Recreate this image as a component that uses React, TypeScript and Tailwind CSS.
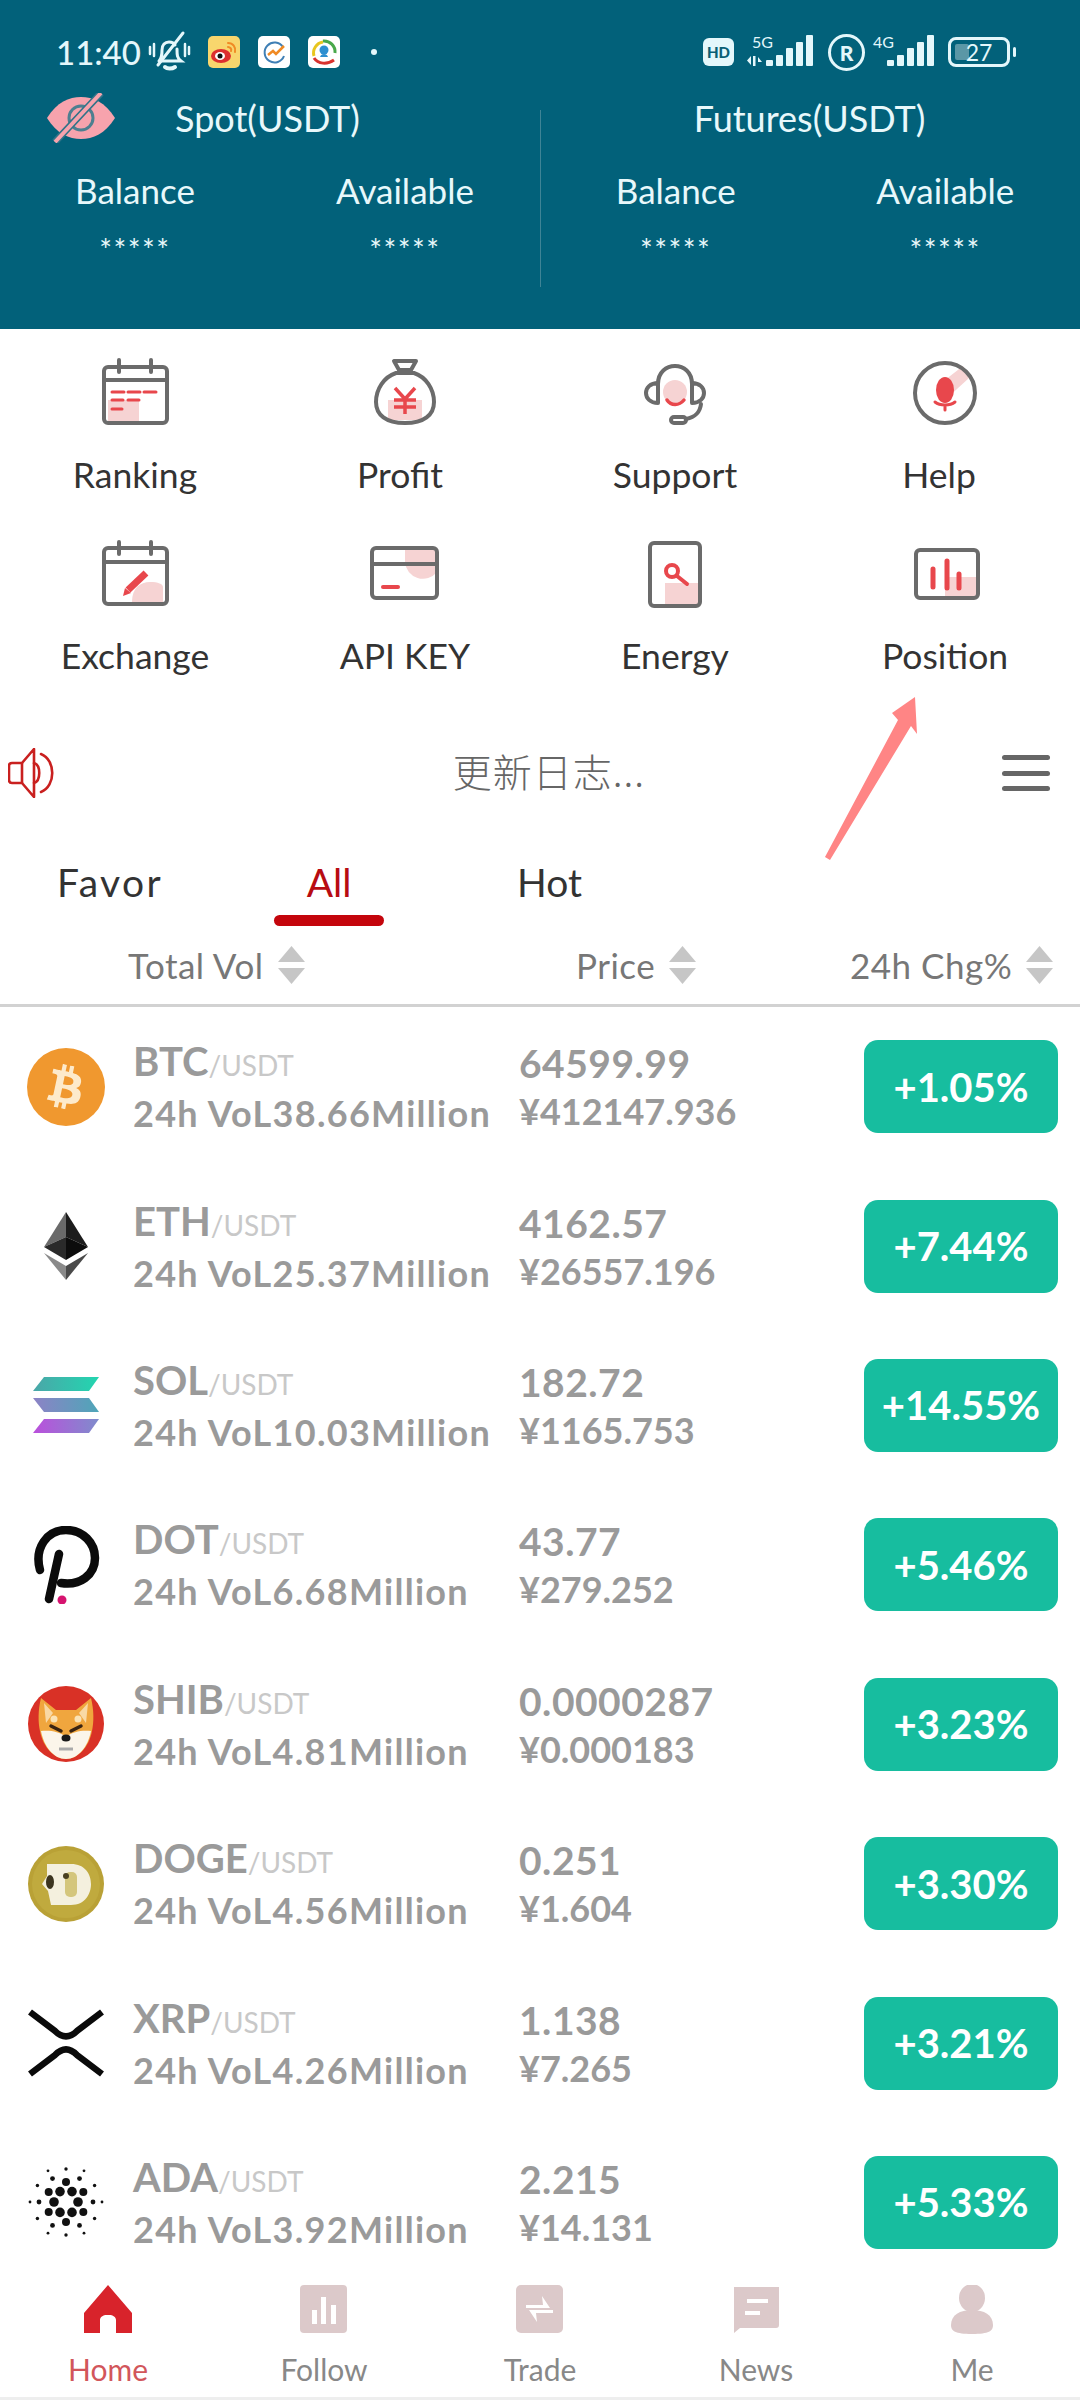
import React from 'react';
import { FaBtc } from 'react-icons/fa';

const GREY = '#6b6b6b';
const RED = '#e8474c';
const PINK = '#f6d3d3';

const StatusBar = () => (
  <div className="flex h-[34px] items-center text-[#e4f7fb]">
    <span className="ml-[56px] w-[84px] text-[33px] leading-none font-medium">11:40</span>
    {/* muted bell */}
    <svg viewBox="0 0 46 46" className="ml-[6px] h-[46px] w-[46px]" fill="none" stroke="currentColor" strokeWidth="3" strokeLinecap="round">
      <path d="M13 32c3-3 3-6 3-11 0-5 3-8 7-8 3 0 5 1 6 3M31 20c0 6 0 9 4 12H13" />
      <path d="M19 38c2 2 7 2 10 0" strokeWidth="4" />
      <path d="M12 36 L37 4" />
      <path d="M4 18v7M8 15v12M39 15v12M43 18v7" strokeWidth="2.5" />
    </svg>
    {/* weibo */}
    <svg viewBox="0 0 32 32" className="ml-[16px] h-[32px] w-[32px]">
      <rect width="32" height="32" rx="5" fill="#f8d66d" />
      <ellipse cx="13" cy="20" rx="10" ry="7" fill="#dc2f2f" />
      <ellipse cx="12" cy="20" rx="5" ry="4" fill="#fff" />
      <circle cx="12" cy="20" r="2.5" fill="#111" />
      <path d="M20 7c5 0 8 4 7 9M20 11c2 0 4 2 3 4" fill="none" stroke="#f08a24" strokeWidth="2" strokeLinecap="round" />
    </svg>
    <svg viewBox="0 0 32 32" className="ml-[18px] h-[32px] w-[32px]">
      <rect width="32" height="32" rx="5" fill="#fff" />
      <path d="M25 11a10 10 0 1 0 1 9" fill="none" stroke="#3f7fb5" strokeWidth="2" />
      <path d="M10 19l5-4 3 3 8-8" fill="none" stroke="#f08a24" strokeWidth="2.5" />
    </svg>
    <svg viewBox="0 0 32 32" className="ml-[18px] h-[32px] w-[32px]">
      <rect width="32" height="32" rx="5" fill="#fff" />
      <path d="M6 20a11 11 0 0 1 9-14" fill="none" stroke="#e8c61e" strokeWidth="3" />
      <path d="M15 5a11 11 0 0 1 12 12" fill="none" stroke="#49a84a" strokeWidth="3" />
      <path d="M6 22c4 6 13 7 20 2" fill="none" stroke="#d8322e" strokeWidth="3" />
      <circle cx="16" cy="14" r="4.5" fill="#2d8fd0" />
      <path d="M12 21c1-4 7-4 8 0z" fill="#2d8fd0" />
    </svg>
    <span className="ml-[31px] h-[6px] w-[6px] rounded-full bg-[#e4f7fb]" />

    <div className="ml-auto mr-[70px] flex items-center">
      <span className="flex h-[28px] w-[31px] items-center justify-center rounded-[6px] bg-[#e4f7fb] text-[15px] leading-none font-black text-[#0a5f75]">HD</span>
      <div className="relative ml-[12px] h-[34px] w-[68px]">
        <span className="absolute left-[6px] top-[-2px] text-[16px] leading-[18px]">5G</span>
        <svg viewBox="0 0 68 34" className="h-[34px] w-[68px]" fill="currentColor">
          <path d="M5 21v9l-4-4.500zM7 21h2.500v10H7zM12 22l4 5h-4z" />
          <rect x="20" y="25" width="7" height="6" rx="1" />
          <rect x="30" y="20" width="7" height="11" rx="1" />
          <rect x="40" y="13" width="7" height="18" rx="1" />
          <rect x="50" y="7" width="7" height="24" rx="1" />
          <rect x="60" y="0" width="7" height="31" rx="1" />
        </svg>
      </div>
      <div className="ml-[14px] flex h-[37px] w-[37px] items-center justify-center rounded-full border-[3px] border-[#e4f7fb] text-[21px] leading-none font-black">R</div>
      <div className="relative ml-[8px] h-[34px] w-[61px]">
        <span className="absolute left-0 top-[-2px] text-[16px] leading-[18px]">4G</span>
        <svg viewBox="0 0 61 34" className="h-[34px] w-[61px]" fill="currentColor">
          <rect x="14" y="25" width="7" height="6" rx="1" />
          <rect x="24" y="20" width="7" height="11" rx="1" />
          <rect x="34" y="13" width="7" height="18" rx="1" />
          <rect x="44" y="7" width="7" height="24" rx="1" />
          <rect x="54" y="0" width="7" height="31" rx="1" />
        </svg>
      </div>
      <div className="relative ml-[14px] flex h-[30px] w-[62px] items-center justify-center rounded-[8px] border-[3px] border-[#e4f7fb] text-[23px] leading-none">
        <span className="absolute left-[4px] top-[4px] h-[16px] w-[14px] rounded-[2px] bg-[#5b97a6]" />
        <span className="relative">27</span>
        <span className="absolute -right-[9px] top-[7px] h-[10px] w-[3px] rounded-full bg-[#e4f7fb]" />
      </div>
    </div>
  </div>
);

const EyeOff = () => (
  <svg viewBox="0 0 68 50" className="h-[50px] w-[68px] shrink-0">
    <path d="M0 25C10 9 22 4 34 4s24 5 34 21C58 41 46 46 34 46S10 41 0 25z" fill="#f7a3ad" />
    <circle cx="34" cy="25" r="12" fill="none" stroke="#4d7f90" strokeWidth="3" />
    <path d="M8 49 L54 0" stroke="#2f7388" strokeWidth="7" />
    <path d="M8 49 L54 0" stroke="#f7a3ad" strokeWidth="4" />
  </svg>
);

const Amounts = () => (
  <div className="mt-[46px] grid grid-cols-2 text-center text-[#e8f8fb]">
    <div>
      <div className="h-[36px] text-[35px] leading-[36px]">Balance</div>
      <div className="mt-[22px] h-[30px] text-[30px] leading-[38px] tracking-[1.500px]">*****</div>
    </div>
    <div>
      <div className="h-[36px] text-[35px] leading-[36px]">Available</div>
      <div className="mt-[22px] h-[30px] text-[30px] leading-[38px] tracking-[1.500px]">*****</div>
    </div>
  </div>
);

const Header = () => (
  <div className="h-[329px] shrink-0 bg-[#02617a] pt-[35px]">
    <StatusBar />
    <div className="mt-[41px] grid grid-cols-2">
      <div className="h-[177px]">
        <div className="flex h-[16px] items-center pl-[47px] text-[36px] text-[#e8f8fb]">
          <EyeOff />
          <span className="ml-[60px]">Spot(USDT)</span>
        </div>
        <Amounts />
      </div>
      <div className="h-[177px] border-l border-[#3f8496]">
        <div className="flex h-[16px] items-center justify-center pr-[2px] text-[36px] text-[#e8f8fb]">Futures(USDT)</div>
        <Amounts />
      </div>
    </div>
  </div>
);

const Box = ({ children }: { children: React.ReactNode }) => (
  <svg viewBox="0 0 80 70" className="mx-auto h-[70px] w-[80px]" fill="none" stroke={GREY} strokeWidth="4" strokeLinecap="round" strokeLinejoin="round">
    {children}
  </svg>
);

const menuIcons: Record<string, React.ReactNode> = {
  Ranking: (
    <Box>
      <rect x="13" y="42" width="31" height="21" fill={PINK} stroke="none" />
      <rect x="9" y="9" width="63" height="56" rx="4" />
      <path d="M9 22h63M24 2v12M56 2v12" />
      <path d="M17 34h12M33 34h12M49 34h12M17 42h11M33 42h11M17 51h10" stroke={RED} strokeWidth="3" />
    </Box>
  ),
  Profit: (
    <Box>
      <rect x="23" y="42" width="34" height="20" fill={PINK} stroke="none" />
      <path d="M29 3h22l-5 9H34z" />
      <path d="M31 15C19 19 11 31 11 44c0 13 10 21 29 21s29-8 29-21c0-13-8-25-20-29z" />
      <path d="M30 30l10 11 10-11M40 41v15M29 42h22M29 49h22" stroke={RED} strokeWidth="3.5" strokeLinecap="butt" />
    </Box>
  ),
  Support: (
    <Box>
      <circle cx="40" cy="34" r="12" fill={PINK} stroke="none" />
      <path d="M23 26c0-24 34-24 34 0" />
      <path d="M23 25c-8 0-12 5-12 10s4 10 12 10zM57 25c8 0 12 5 12 10s-4 10-12 10z" />
      <path d="M66 46c-1 9-6 13-15 15" />
      <rect x="36" y="59" width="15" height="6" rx="3" />
      <path d="M32 42c4 6 12 6 17 0" stroke={RED} strokeWidth="3.5" />
    </Box>
  ),
  Help: (
    <Box>
      <path d="M40 22L58 8l6 12-24 22z" fill={PINK} stroke="none" />
      <circle cx="40" cy="35" r="30" />
      <ellipse cx="40" cy="32" rx="9" ry="13" fill={RED} stroke="none" />
      <path d="M30 44c5 4 15 4 20 0M40 47v5" stroke={RED} strokeWidth="3" />
    </Box>
  ),
  Exchange: (
    <Box>
      <path d="M37 62c0-14 8-20 18-20 8 0 13 2 13 5v15z" fill={PINK} stroke="none" />
      <rect x="9" y="8" width="63" height="56" rx="4" />
      <path d="M9 22h63M24 2v12M56 2v12" />
      <path d="M33 50L51 33" stroke={RED} strokeWidth="7" strokeLinecap="butt" />
      <path d="M28 56l2-8 6 5z" fill={RED} stroke="none" />
    </Box>
  ),
  'API KEY': (
    <Box>
      <path d="M40 8h32v24a18 18 0 0 1-32-10z" fill={PINK} stroke="none" />
      <rect x="7" y="8" width="65" height="50" rx="4" />
      <path d="M7 24h65" />
      <path d="M18 47h15" stroke={RED} strokeWidth="4" />
    </Box>
  ),
  Energy: (
    <Box>
      <rect x="30" y="43" width="33" height="21" fill={PINK} stroke="none" />
      <rect x="15" y="3" width="50" height="63" rx="4" />
      <circle cx="37" cy="31" r="6" stroke={RED} />
      <path d="M42 36l10 8" stroke={RED} />
    </Box>
  ),
  Position: (
    <Box>
      <rect x="40" y="37" width="31" height="19" fill={PINK} stroke="none" />
      <rect x="11" y="10" width="62" height="48" rx="4" />
      <path d="M28 29v18M42 21v27M54 34v14" stroke={RED} strokeWidth="5" />
    </Box>
  ),
};

const MenuCell = ({ label, shift }: { label: string; shift?: string }) => (
  <div className="text-center">
    {menuIcons[label]}
    <div className={`text-[35.500px] leading-[40px] text-[#333] ${shift ?? ''}`}>{label}</div>
  </div>
);

const Menu = () => (
  <div className="grid shrink-0 grid-cols-4 pt-[29px]">
    <div className="col-span-4 grid grid-cols-4 [&_div_div]:mt-[27px]">
      <MenuCell label="Ranking" />
      <MenuCell label="Profit" shift="pr-[10px]" />
      <MenuCell label="Support" />
      <MenuCell label="Help" shift="pr-[12px]" />
    </div>
    <div className="col-span-4 mt-[45px] grid grid-cols-4 [&_div_div]:mt-[26px]">
      <MenuCell label="Exchange" />
      <MenuCell label="API KEY" />
      <MenuCell label="Energy" />
      <MenuCell label="Position" />
    </div>
  </div>
);

const Notice = () => (
  <div className="mt-[47px] flex h-[100px] shrink-0 items-center justify-between pl-[8px] pr-[30px]">
    <svg viewBox="0 0 48 50" className="h-[50px] w-[48px]" fill="none" stroke="#c9201f" strokeWidth="2.6" strokeLinejoin="round">
      <path d="M14 15H4c-2 0-3 1-3 3v14c0 2 1 3 3 3h10l12 14V1z" />
      <path d="M14 15v20" />
      <path d="M26 15c7 2 7 18 0 20M33 6c15 6 15 32 0 38" strokeLinecap="round" />
    </svg>
    <span className="mb-[5px] ml-[40px] font-['Noto_Sans_CJK_SC',sans-serif] text-[39px] font-light tracking-[1px] text-[#666]">更新日志...</span>
    <div className="flex h-[36px] w-[48px] flex-col justify-between">
      <span className="h-[5px] rounded-full bg-[#666]" />
      <span className="h-[5px] rounded-full bg-[#666]" />
      <span className="h-[5px] rounded-full bg-[#666]" />
    </div>
  </div>
);

const Tabs = () => (
  <div className="mt-[34px] flex shrink-0 pl-[57px] text-[39px] leading-[50px]">
    <div className="w-[104px] tracking-[2.400px] text-[#333]">Favor</div>
    <div className="ml-[113px] w-[110px] text-center text-[#b80c12]">
      All
      <div className="mt-[8px] h-[11px] rounded-full bg-[#c4050c]" />
    </div>
    <div className="ml-[133px] text-[#333]">Hot</div>
  </div>
);

const SortArrows = () => (
  <svg viewBox="0 0 27 38" className="ml-[14px] h-[38px] w-[27px] shrink-0" fill="#c6c6c6">
    <path d="M13.5 0L27 16H0zM0 22h27L13.5 38z" />
  </svg>
);

const SortHeader = () => (
  <div className="mt-[19px] shrink-0 border-b-[3px] border-[#d2d2d2] pb-[19px]">
    <div className="grid h-[40px] grid-cols-[448px_274px_1fr] pl-[128px] text-[35px] leading-[40px] tracking-[0.500px] text-[#777]">
      <div className="flex items-center">Total Vol<SortArrows /></div>
      <div className="flex items-center">Price<SortArrows /></div>
      <div className="flex items-center">24h Chg%<SortArrows /></div>
    </div>
  </div>
);

const coinIcons: Record<string, React.ReactNode> = {
  BTC: (
    <div className="flex h-[78px] w-[78px] items-center justify-center rounded-full bg-[#f0982f] text-[#fdeacb]">
      <FaBtc className="h-[44px] w-[44px] rotate-[12deg]" />
    </div>
  ),
  ETH: (
    <svg viewBox="0 0 78 78" className="h-[78px] w-[78px]">
      <path d="M39 5L17 40l22-10z" fill="#6a6a6a" />
      <path d="M39 5l22 35-22-10z" fill="#1c1c1c" />
      <path d="M17 40l22 13V30z" fill="#2a2a2a" />
      <path d="M61 40L39 53V30z" fill="#0c0c0c" />
      <path d="M17 46l22 27V59z" fill="#8a8a8a" />
      <path d="M61 46L39 73V59z" fill="#4a4a4a" />
    </svg>
  ),
  SOL: (
    <svg viewBox="0 0 78 78" className="h-[78px] w-[78px]">
      <defs>
        <linearGradient id="solA" x1="0" x2="1"><stop offset="0" stopColor="#4ba6a8" /><stop offset="1" stopColor="#22d6b0" /></linearGradient>
        <linearGradient id="solB" x1="0" x2="1"><stop offset="0" stopColor="#8d82c6" /><stop offset="1" stopColor="#4ea6b8" /></linearGradient>
        <linearGradient id="solC" x1="0" x2="1"><stop offset="0" stopColor="#bb4fdc" /><stop offset="1" stopColor="#7f8ccc" /></linearGradient>
      </defs>
      <path d="M17 11h55L62 25H6z" fill="url(#solA)" />
      <path d="M6 32h56l10 14H17z" fill="url(#solB)" />
      <path d="M17 53h55L62 67H6z" fill="url(#solC)" />
    </svg>
  ),
  DOT: (
    <svg viewBox="0 0 78 78" className="h-[78px] w-[78px]" fill="none">
      <path d="M13 44C7 22 20 4 39 4c17 0 29 13 29 28 0 17-15 28-34 25" stroke="#0b0b0b" strokeWidth="8.500" strokeLinecap="round" />
      <path d="M32 28L22 73" stroke="#0b0b0b" strokeWidth="8.500" strokeLinecap="round" />
      <circle cx="35" cy="74" r="4.500" fill="#d6136f" />
    </svg>
  ),
  SHIB: (
    <svg viewBox="0 0 78 78" className="h-[78px] w-[78px]">
      <circle cx="39" cy="39" r="38" fill="#d93126" />
      <path d="M14 13l15 12h20l15-12c3 12 3 24 1 33-3 16-14 28-26 28S16 62 13 46c-2-9-2-21 1-33z" fill="#f0a63e" />
      <path d="M17 18l9 10-7 10zM61 18l-9 10 7 10z" fill="#f9d9a5" />
      <circle cx="27" cy="34" r="3.500" fill="#fbe3b5" />
      <circle cx="51" cy="34" r="3.500" fill="#fbe3b5" />
      <path d="M14 46c8-1 18 0 25 6 7-6 17-7 25-6-3 16-13 28-25 28S17 62 14 46z" fill="#fbf5ea" />
      <path d="M24 41l10 5M54 41l-10 5" stroke="#3a2412" strokeWidth="3.500" strokeLinecap="round" />
      <ellipse cx="39" cy="53" rx="4.500" ry="3.500" fill="#1a1a1a" />
      <path d="M32 64h14" stroke="#aaa" strokeWidth="3" />
    </svg>
  ),
  DOGE: (
    <svg viewBox="0 0 78 78" className="h-[78px] w-[78px]">
      <circle cx="39" cy="39" r="38" fill="#b9a136" />
      <circle cx="39" cy="39" r="34" fill="#c0aa3e" />
      <path d="M20 19h24c14 0 20 10 20 20s-6 21-20 21H24l-3-14-6-7 5-8z" fill="#f4f0de" />
      <ellipse cx="23" cy="37" rx="4" ry="7" fill="#3c3520" />
      <rect x="38" y="27" width="12" height="25" rx="5" fill="#d4c67c" />
      <circle cx="39" cy="31" r="3" fill="#4a4020" />
    </svg>
  ),
  XRP: (
    <svg viewBox="0 0 78 78" className="h-[78px] w-[78px]" fill="none" stroke="#0a0a0a" strokeWidth="6.500">
      <path d="M3 8L28 27Q39 38 50 27L75 8" />
      <path d="M3 70L28 51Q39 40 50 51L75 70" />
    </svg>
  ),
  ADA: (
    <svg viewBox="-39 -39 78 78" className="h-[78px] w-[78px]" fill="#111">
      {[0, 60, 120, 180, 240, 300].map((a) => (
        <circle key={`a${a}`} r="4.800" cx={12 * Math.cos((a * Math.PI) / 180)} cy={12 * Math.sin((a * Math.PI) / 180)} />
      ))}
      {[30, 90, 150, 210, 270, 330].map((a) => (
        <circle key={`b${a}`} r="4" cx={20 * Math.cos((a * Math.PI) / 180)} cy={20 * Math.sin((a * Math.PI) / 180)} />
      ))}
      {[0, 60, 120, 180, 240, 300].map((a) => (
        <circle key={`m${a}`} r="2.400" cx={27 * Math.cos((a * Math.PI) / 180)} cy={27 * Math.sin((a * Math.PI) / 180)} />
      ))}
      {[30, 90, 150, 210, 270, 330].map((a) => (
        <circle key={`o${a}`} r="1.700" cx={33 * Math.cos((a * Math.PI) / 180)} cy={33 * Math.sin((a * Math.PI) / 180)} />
      ))}
      {[0, 60, 120, 180, 240, 300].map((a) => (
        <circle key={`x${a}`} r="1.400" cx={36 * Math.cos((a * Math.PI) / 180)} cy={36 * Math.sin((a * Math.PI) / 180)} />
      ))}
    </svg>
  ),
};

const coins = [
  { name: 'BTC', vol: '38.66', price: '64599.99', cny: '¥412147.936', chg: '+1.05%' },
  { name: 'ETH', vol: '25.37', price: '4162.57', cny: '¥26557.196', chg: '+7.44%' },
  { name: 'SOL', vol: '10.03', price: '182.72', cny: '¥1165.753', chg: '+14.55%' },
  { name: 'DOT', vol: '6.68', price: '43.77', cny: '¥279.252', chg: '+5.46%' },
  { name: 'SHIB', vol: '4.81', price: '0.0000287', cny: '¥0.000183', chg: '+3.23%' },
  { name: 'DOGE', vol: '4.56', price: '0.251', cny: '¥1.604', chg: '+3.30%' },
  { name: 'XRP', vol: '4.26', price: '1.138', cny: '¥7.265', chg: '+3.21%' },
  { name: 'ADA', vol: '3.92', price: '2.215', cny: '¥14.131', chg: '+5.33%' },
];

const CoinRow = ({ coin }: { coin: (typeof coins)[number] }) => (
  <div className="flex h-[159.400px] items-center pl-[27px] font-bold text-[#9a9a9a]">
    <div className="h-[78px] w-[78px] shrink-0">{coinIcons[coin.name]}</div>
    <div className="ml-[28px] w-[386px] shrink-0 pt-[1px]">
      <div className="text-[40px] leading-[48px]">
        {coin.name}
        <span className="text-[28px] font-normal text-[#c8c8c8]">/USDT</span>
      </div>
      <div className="text-[36px] leading-[48px] tracking-[1.300px]">24h VoL{coin.vol}Million</div>
    </div>
    <div className="w-[345px] shrink-0 pt-[1px]">
      <div className="text-[39px] leading-[48px] tracking-[0.500px]">{coin.price}</div>
      <div className="text-[36px] leading-[48px]">{coin.cny}</div>
    </div>
    <div className="flex h-[93px] w-[194px] shrink-0 items-center justify-center rounded-[14px] bg-[#17bd9f] text-[40px] text-white">
      {coin.chg}
    </div>
  </div>
);

const NAV_OFF = '#dcc9ca';

const navItems: { label: string; color: string; icon: React.ReactNode }[] = [
  {
    label: 'Home',
    color: '#d2565b',
    icon: <path d="M24 0l24 28v20H32V35c0-3-3-5-7-5h-2c-4 0-7 2-7 5v13H0V28z" fill="#d8232b" />,
  },
  {
    label: 'Follow',
    color: '#888',
    icon: (
      <>
        <rect x="0" width="47" height="48" rx="4" fill={NAV_OFF} />
        <path d="M12 25h5v14h-5zM21 12h5v27h-5zM31 20h5v19h-5z" fill="#fff" />
      </>
    ),
  },
  {
    label: 'Trade',
    color: '#888',
    icon: (
      <>
        <rect x="0" width="47" height="48" rx="5" fill={NAV_OFF} />
        <path d="M26 11l8 12H10v-3h17zM21 37l-8-12h24v3H20z" fill="#fff" />
      </>
    ),
  },
  {
    label: 'News',
    color: '#888',
    icon: (
      <>
        <path d="M2 2h45v38c0 2-1 3-3 3H8l-6 5z" fill={NAV_OFF} />
        <path d="M15 14h21v4H15zM13 26h15v4H13z" fill="#fff" />
      </>
    ),
  },
  {
    label: 'Me',
    color: '#888',
    icon: (
      <>
        <ellipse cx="24" cy="13" rx="13" ry="14" fill={NAV_OFF} />
        <path d="M3 40c0-10 9-15 21-15s21 5 21 15c0 6-4 9-21 9S3 46 3 40z" fill={NAV_OFF} />
      </>
    ),
  },
];

const BottomNav = () => (
  <div className="grid h-[138px] shrink-0 grid-cols-5 border-b-[3px] border-[#eeeeee] pt-[23px]">
    {navItems.map((item) => (
      <div key={item.label} className="text-center">
        <svg viewBox="0 0 48 50" className="mx-auto h-[50px] w-[48px]">
          {item.icon}
        </svg>
        <div className="mt-[16px] text-[30px] leading-[36px]" style={{ color: item.color }}>
          {item.label}
        </div>
      </div>
    ))}
  </div>
);

export default function App() {
  return (
    <div className="relative flex h-[2400px] w-[1080px] flex-col overflow-hidden bg-white font-['Lato','Noto_Sans_CJK_SC',sans-serif]">
      <Header />
      <Menu />
      <Notice />
      <Tabs />
      <SortHeader />
      <div className="min-h-0 flex-1 overflow-hidden">
        {coins.map((coin) => (
          <CoinRow key={coin.name} coin={coin} />
        ))}
      </div>
      <BottomNav />

      {/* annotation arrow drawn over the screenshot */}
      <svg viewBox="0 0 120 180" className="absolute left-[810px] top-[690px] h-[180px] w-[120px]">
        <path d="M15 167L88 30l-6-7L105 7l2 37-6-8L20 170z" fill="#ff8585" />
      </svg>
    </div>
  );
}
